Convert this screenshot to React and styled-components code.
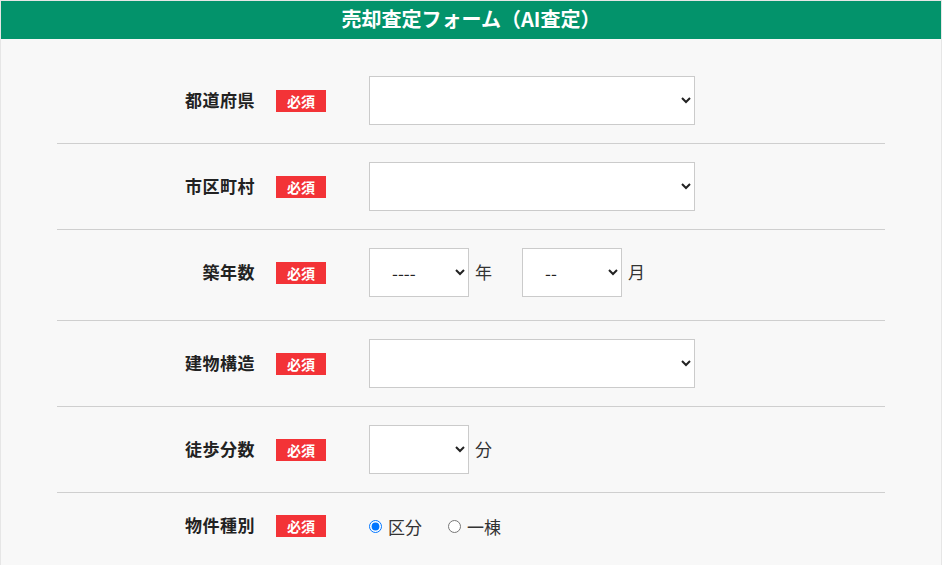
import React from 'react'
import styled, { createGlobalStyle } from 'styled-components'

const GlobalStyle = createGlobalStyle`
  html, body {
    margin: 0;
    padding: 0;
    background: #ffffff;
  }
  body {
    font-family: "Noto Sans CJK JP", "Noto Sans", sans-serif;
    color: #333;
  }
`

const Frame = styled.div`
  width: 940px;
  border: 1px solid #e6e6e6;
  border-bottom: none;
  background: #f8f8f8;
  min-height: 564px;
`

const TitleBar = styled.h1`
  margin: 0;
  height: 38px;
  background: #03936b;
  color: #fff;
  font-size: 20px;
  font-weight: 700;
  line-height: 36px;
  text-align: center;
`

const Rows = styled.div`
  width: 828px;
  margin-left: 56px;
  padding-top: 19px;
`

const Row = styled.div`
  display: flex;
  align-items: center;
  padding: 18px 0 ${(p) => (p.$tall ? 23 : 18)}px;
  border-bottom: ${(p) => (p.$last ? 'none' : '1px solid #cfcfcf')};
  min-height: ${(p) => (p.$last ? '30px' : 'auto')};
`

const Label = styled.div`
  width: 198px;
  padding-bottom: 3px;
  text-align: right;
  font-size: 17px;
  line-height: 1;
  font-weight: 700;
  color: #222;
  letter-spacing: 0.5px;
`

const Badge = styled.span`
  display: inline-flex;
  align-items: center;
  justify-content: center;
  width: 50px;
  height: 22px;
  margin-left: 21px;
  background: #f33337;
  color: #fff;
  font-size: 14px;
  font-weight: 700;
  line-height: 1;
`

const Field = styled.div`
  display: flex;
  align-items: center;
  margin-left: 43px;
`

const Select = styled.select`
  width: ${(p) => p.$w}px;
  height: 49px;
  box-sizing: border-box;
  border: 1px solid #cbcbcb;
  border-radius: 0;
  background: #fff;
  padding: 0 6px 0 18px;
  font-family: inherit;
  font-size: 17px;
  color: #222;
  outline: none;
`

const Unit = styled.span`
  font-size: 17px;
  line-height: 1;
  padding-bottom: 3px;
  color: #333;
  margin-left: 6px;
  margin-right: ${(p) => (p.$gap ? 30 : 0)}px;
`

const RadioLabel = styled.label`
  display: inline-flex;
  align-items: center;
  font-size: 17px;
  line-height: 1;
  color: #333;
  margin-right: 26px;

  input {
    width: 13px;
    height: 13px;
    margin: 0 6px 0 0;
  }
`

const fields = [
  { label: '都道府県', type: 'wide' },
  { label: '市区町村', type: 'wide' },
  { label: '築年数', type: 'age' },
  { label: '建物構造', type: 'wide' },
  { label: '徒歩分数', type: 'walk' },
  { label: '物件種別', type: 'kind' },
]

function Control({ type }) {
  if (type === 'wide') {
    return <Select $w={326} defaultValue=""><option value=""></option></Select>
  }
  if (type === 'age') {
    return (
      <>
        <Select $w={100}><option>----</option></Select>
        <Unit $gap>年</Unit>
        <Select $w={100}><option>--</option></Select>
        <Unit>月</Unit>
      </>
    )
  }
  if (type === 'walk') {
    return (
      <>
        <Select $w={100} defaultValue=""><option value=""></option></Select>
        <Unit>分</Unit>
      </>
    )
  }
  return (
    <>
      <RadioLabel><input type="radio" name="kind" defaultChecked />区分</RadioLabel>
      <RadioLabel><input type="radio" name="kind" />一棟</RadioLabel>
    </>
  )
}

export default function App() {
  return (
    <>
      <GlobalStyle />
      <Frame>
        <TitleBar>売却査定フォーム（AI査定）</TitleBar>
        <Rows>
          {fields.map((f, i) => (
            <Row key={f.label} $tall={f.type === 'age'} $last={i === fields.length - 1}>
              <Label>{f.label}</Label>
              <Badge>必須</Badge>
              <Field>
                <Control type={f.type} />
              </Field>
            </Row>
          ))}
        </Rows>
      </Frame>
    </>
  )
}
